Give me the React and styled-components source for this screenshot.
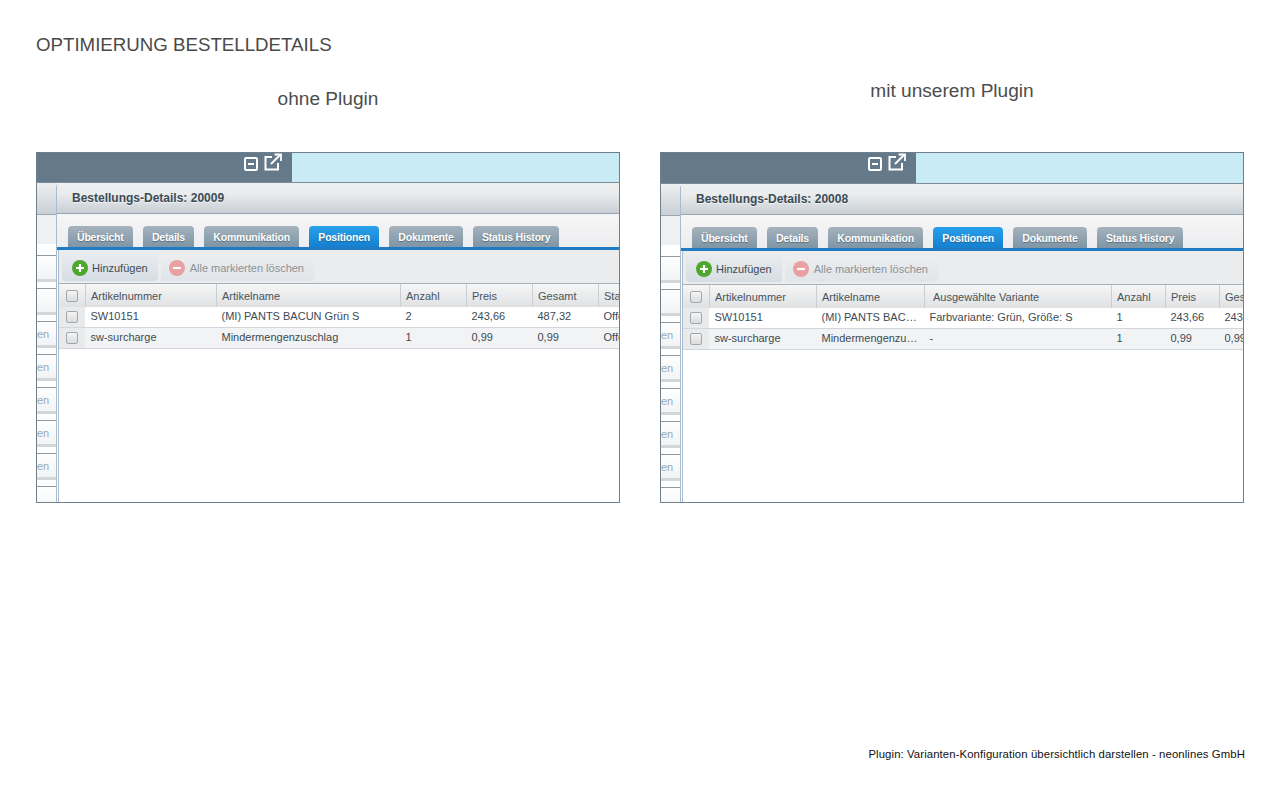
import React from 'react'
import styled, { createGlobalStyle } from 'styled-components'

const GlobalStyle = createGlobalStyle`
	html, body {
		margin: 0;
		background: #fff;
		font-family: 'Liberation Sans', Arial, sans-serif;
	}
`

//table data
const plainColumns = [
	{ label: 'Artikelnummer', width: 131 },
	{ label: 'Artikelname', width: 184 },
	{ label: 'Anzahl', width: 66 },
	{ label: 'Preis', width: 66 },
	{ label: 'Gesamt', width: 66 },
	{ label: 'Status', width: 60 },
]
const plainRows = [
	['SW10151', '(MI) PANTS BACUN Grün S', '2', '243,66', '487,32', 'Offen'],
	['sw-surcharge', 'Mindermengenzuschlag', '1', '0,99', '0,99', 'Offen'],
]
const pluginColumns = [
	{ label: 'Artikelnummer', width: 107 },
	{ label: 'Artikelname', width: 108 },
	{ label: 'Ausgewählte Variante', width: 187, headIndent: 8 },
	{ label: 'Anzahl', width: 54 },
	{ label: 'Preis', width: 54 },
	{ label: 'Gesamt', width: 60 },
]
const pluginRows = [
	['SW10151', '(MI) PANTS BACUN Grün S', 'Farbvariante: Grün, Größe: S', '1', '243,66', '243,66'],
	['sw-surcharge', 'Mindermengenzuschlag', '-', '1', '0,99', '0,99'],
]
const tabs = ['Übersicht', 'Details', 'Kommunikation', 'Positionen', 'Dokumente', 'Status History']

const WindowIcons = () => (
	<IconRow>
		<svg width='14' height='14' viewBox='0 0 14 14' fill='none' stroke='#fff' strokeWidth='2'>
			<rect x='1' y='1' width='12' height='12' rx='1' />
			<path d='M4 7h6' />
		</svg>
		<svg width='18' height='18' viewBox='0 0 18 18' fill='none' stroke='#fff' strokeWidth='2'>
			<path d='M8 4H1.500v12.500h12.500V10' />
			<path d='M7 11 16 2' />
			<path d='M10.500 1.500h6.500V8' strokeWidth='1.800' />
		</svg>
	</IconRow>
)

const RoundIcon = ({ color, plus }) => (
	<svg width='16' height='16' viewBox='0 0 16 16'>
		<circle cx='8' cy='8' r='8' fill={color} />
		<path d={plus ? 'M8 4v8M4 8h8' : 'M4 8h8'} stroke='#fff' strokeWidth='2.200' fill='none' />
	</svg>
)

const Panel = ({ orderNo, columns, rows, shifted }) => {
	const template = `26px ${columns.map(c => c.width + 'px').join(' ')}`
	return (
		<PanelBox>
			<TopBar $height={shifted ? 30 : 29}>
				<TopDark>
					<WindowIcons />
				</TopDark>
			</TopBar>
			<PanelBody>
				<Strip>
					<StripHead />
					<StripFill />
					{[false, false, true, true, true, true, true, false].map((hasText, i) => (
						<StripRow key={i}>{hasText && 'en'}</StripRow>
					))}
				</Strip>
				<Window>
					<WindowHead>
						<WindowTitle>Bestellungs-Details: {orderNo}</WindowTitle>
					</WindowHead>
					<TabBar>
						{tabs.map(tab => (
							<Tab key={tab} $active={tab === 'Positionen'}>
								{tab}
							</Tab>
						))}
					</TabBar>
					<Content>
						<Toolbar>
							<ToolButton>
								<RoundIcon color='#4fa82e' plus />
								Hinzufügen
							</ToolButton>
							<ToolButton $disabled>
								<RoundIcon color='#e9a0a0' />
								Alle markierten löschen
							</ToolButton>
						</Toolbar>
						<HeadRow style={{ gridTemplateColumns: template }}>
							<CheckCell $head>
								<CheckBox />
							</CheckCell>
							{columns.map(col => (
								<HeadCell key={col.label} $indent={col.headIndent || 5}>
									{col.label}
								</HeadCell>
							))}
						</HeadRow>
						{rows.map((row, i) => (
							<DataRow key={row[0]} $odd={i % 2 === 1} style={{ gridTemplateColumns: template }}>
								<CheckCell>
									<CheckBox />
								</CheckCell>
								{row.map((value, j) => (
									<DataCell key={j}>{value}</DataCell>
								))}
							</DataRow>
						))}
					</Content>
				</Window>
			</PanelBody>
		</PanelBox>
	)
}

const App = () => (
	<>
		<GlobalStyle />
		<Page>
			<Title>OPTIMIERUNG BESTELLDETAILS</Title>
			<Columns>
				<Column>
					<Caption $top={20} $bottom={42}>ohne Plugin</Caption>
					<Panel orderNo='20009' columns={plainColumns} rows={plainRows} />
				</Column>
				<Column>
					<Caption $top={12} $bottom={50}>mit unserem Plugin</Caption>
					<Panel orderNo='20008' columns={pluginColumns} rows={pluginRows} shifted />
				</Column>
			</Columns>
			<Footer>Plugin: Varianten-Konfiguration übersichtlich darstellen - neonlines GmbH</Footer>
		</Page>
	</>
)

const Page = styled.div`
	width: 1280px;
	height: 800px;
	padding: 34px 35px 0 36px;
	box-sizing: border-box;
	overflow: hidden;
	color: #444;
`

const Title = styled.h1`
	margin: 0;
	font-size: 18.700px;
	line-height: 21px;
	font-weight: 400;
	color: #4a4a4a;
`

const Columns = styled.div`
	display: grid;
	grid-template-columns: 584px 584px;
	column-gap: 40px;
	margin-top: 13px;
`

const Column = styled.div`
	display: flex;
	flex-direction: column;
`

const Caption = styled.div`
	text-align: center;
	font-size: 19.100px;
	line-height: 22px;
	color: #4d4d4d;
	margin-top: ${p => p.$top}px;
	margin-bottom: ${p => p.$bottom}px;
`

const Footer = styled.div`
	margin-top: 245px;
	text-align: right;
	font-size: 11.350px;
	line-height: 13px;
	letter-spacing: 0.1px;
	color: #111;
`

const PanelBox = styled.div`
	height: 351px;
	box-sizing: border-box;
	border: 1px solid #6f7f8b;
	display: flex;
	flex-direction: column;
	overflow: hidden;
	background: #fff;
`

const TopBar = styled.div`
	height: ${p => p.$height}px;
	flex: none;
	background: #c9ebf5;
	border-bottom: 1px solid #7c8d99;
	display: flex;
`

const TopDark = styled.div`
	width: 255px;
	background: #64798a;
	display: flex;
	justify-content: flex-end;
	align-items: flex-start;
`

const IconRow = styled.div`
	display: flex;
	align-items: flex-end;
	gap: 6px;
	padding: 0 10px 0 0;
	height: 18px;
`

const PanelBody = styled.div`
	flex: 1;
	display: flex;
	min-height: 0;
`

const Strip = styled.div`
	width: 19px;
	flex: none;
	overflow: hidden;
`

const StripHead = styled.div`
	height: 32px;
	box-sizing: border-box;
	background: linear-gradient(#eeeff0, #c9d0d6);
	border-bottom: 1px solid #9aa8b2;
`

const StripFill = styled.div`
	height: 29px;
	background: #eef0f2;
	margin-bottom: 11px;
`

const StripRow = styled.div`
	height: 33px;
	box-sizing: border-box;
	border-top: 1px solid #8d9aa4;
	background: linear-gradient(
		#fff 0,
		#f2f3f4 23px,
		#d3d7da 23px,
		#d3d7da 26px,
		#fff 26px
	);
	padding: 6px 8px 0 0;
	text-align: right;
	font-size: 11px;
	line-height: 13px;
	color: #97a9b6;
`

const Window = styled.div`
	flex: 1;
	min-width: 0;
	border-left: 1px solid #a9bbcc;
	border-top-left-radius: 4px;
	background: #fff;
	display: flex;
	flex-direction: column;
	overflow: hidden;
`

const WindowHead = styled.div`
	height: 31px;
	flex: none;
	box-sizing: border-box;
	background: linear-gradient(#eeeff0, #ebeced 35%, #c8cfd5);
	border-bottom: 1px solid #95a3ad;
	padding-left: 15px;
	display: flex;
	align-items: center;
`

const WindowTitle = styled.div`
	font-size: 12px;
	font-weight: 700;
	color: #3b4c57;
	text-shadow: 0 1px 0 rgba(255, 255, 255, 0.6);
`

const TabBar = styled.div`
	height: 36px;
	flex: none;
	box-sizing: border-box;
	background: linear-gradient(#f6f6f7, #ecedef);
	border-bottom: 3px solid #1f7cc4;
	padding: 12px 0 0 11px;
	display: flex;
	align-items: flex-end;
	gap: 10.300px;
`

const Tab = styled.div`
	height: 21px;
	box-sizing: border-box;
	padding: 0 9px;
	border-radius: 4px 4px 0 0;
	background: ${p =>
		p.$active
			? 'linear-gradient(#28a0ea, #1580d0)'
			: 'linear-gradient(#a5b3bd, #7f95a5)'};
	color: #fff;
	font-size: 10.500px;
	font-weight: 700;
	line-height: 22px;
	letter-spacing: -0.2px;
	white-space: nowrap;
	text-shadow: 0 1px 1px rgba(40, 60, 75, 0.5);
`

const Content = styled.div`
	flex: 1;
	margin-left: 1px;
	border-left: 1px solid #a9bbcc;
	background: #fff;
`

const Toolbar = styled.div`
	height: 34px;
	box-sizing: border-box;
	background: #ebecee;
	border-bottom: 1px solid #a5b1ba;
	padding: 4px 0 0 3px;
	display: flex;
	gap: 3px;
`

const ToolButton = styled.div`
	height: 27px;
	box-sizing: border-box;
	padding: 0 10px 0 ${p => (p.$disabled ? 8 : 10)}px;
	display: flex;
	align-items: center;
	gap: ${p => (p.$disabled ? 5 : 4)}px;
	border-radius: 3px;
	font-size: 11px;
	white-space: nowrap;
	color: ${p => (p.$disabled ? '#8b9196' : '#3c4a52')};
	background: ${p =>
		p.$disabled
			? 'linear-gradient(#ecedef, #e1e5e9)'
			: 'linear-gradient(#e9ecef, #d5dde4)'};
`

const HeadRow = styled.div`
	display: grid;
	height: 23px;
	background: linear-gradient(#f6f6f6, #dfe1e3);
`

const DataRow = styled.div`
	display: grid;
	height: 21px;
	box-sizing: border-box;
	background: ${p => (p.$odd ? '#f2f3f5' : '#fff')};
	border-bottom: 1px solid #d2d6da;
`

const CheckCell = styled.div`
	display: flex;
	align-items: center;
	justify-content: center;
	background: ${p => (p.$head ? 'transparent' : '#e9eaec')};
`

const CheckBox = styled.span`
	width: 10px;
	height: 10px;
	border: 1px solid #a2a8ad;
	border-radius: 2px;
	background: linear-gradient(#f4f4f4, #dcdcdc);
`

const HeadCell = styled.div`
	padding-left: ${p => p.$indent}px;
	font-size: 11px;
	line-height: 24px;
	color: #47545c;
	border-left: 1px solid #c9ced2;
	white-space: nowrap;
	overflow: hidden;
`

const DataCell = styled.div`
	padding: 0 6px 0 5.500px;
	font-size: 11px;
	line-height: 19px;
	color: #3c4a52;
	white-space: nowrap;
	overflow: hidden;
	text-overflow: ellipsis;
`

export default App
